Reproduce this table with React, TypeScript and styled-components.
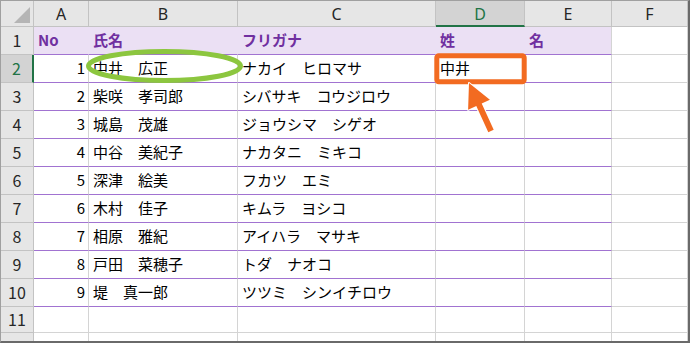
import styled, { createGlobalStyle, css } from 'styled-components';

const GlobalStyle = createGlobalStyle`
  html, body {
    margin: 0;
    padding: 0;
    background: #fff;
  }
  body {
    font-family: "Noto Sans CJK JP", "Noto Sans", sans-serif;
  }
`;

const grid = '#d4d4d4';
const headLine = '#c3c3c3';
const purple = '#a173d1';
const green = '#217346';

const Frame = styled.div`
  position: relative;
  width: 690px;
  height: 343px;
  box-sizing: border-box;
  border-left: 1px solid #a0a0a0;
  border-top: 1px solid #a0a0a0;
  border-right: 2px solid #6a6a6a;
  border-bottom: 2px solid #6a6a6a;
  overflow: hidden;
`;

const Sheet = styled.div`
  display: grid;
  grid-template-columns: 33px 55px 149px 198px 89px 87px 1fr;
  grid-template-rows: 26px repeat(10, 28px) 26px 28px;
  font-size: 15px;
  line-height: 1;
  color: #000;
`;

const Corner = styled.div`
  display: flex;
  align-items: flex-end;
  justify-content: flex-end;
  padding: 0 3px 3px 0;
  background: #e6e6e6;
  border-right: 1px solid ${headLine};
  border-bottom: 1px solid ${headLine};
`;

const Triangle = styled.div`
  width: 16px;
  height: 16px;
  background: #b5b5b5;
  clip-path: polygon(100% 0, 100% 100%, 0 100%);
`;

const ColHead = styled.div<{ $active?: boolean }>`
  display: flex;
  align-items: center;
  justify-content: center;
  padding-top: 1px;
  background: #e6e6e6;
  color: #262626;
  font-family: "Noto Sans", sans-serif;
  font-size: 16px;
  border-right: 1px solid ${headLine};
  border-bottom: 1px solid ${headLine};
  ${(p) =>
    p.$active &&
    css`
      background: #d3d3d3;
      color: ${green};
      border-bottom: 2px solid ${green};
    `}
`;

const RowHead = styled.div<{ $active?: boolean }>`
  display: flex;
  align-items: center;
  justify-content: center;
  padding-bottom: 2px;
  background: #e6e6e6;
  color: #262626;
  font-size: 16px;
  border-right: 1px solid ${headLine};
  border-bottom: 1px solid ${headLine};
  ${(p) =>
    p.$active &&
    css`
      background: #d3d3d3;
      color: ${green};
      border-right: 2px solid ${green};
    `}
`;

const Cell = styled.div<{ $right?: boolean; $title?: boolean; $line?: 'purple' | 'gray' }>`
  display: flex;
  align-items: center;
  justify-content: ${(p) => (p.$right ? 'flex-end' : 'flex-start')};
  padding: 0 3px 2px 4px;
  white-space: nowrap;
  overflow: visible;
  border-right: 1px solid ${grid};
  border-bottom: 1px solid ${(p) => (p.$line === 'purple' ? purple : grid)};
  ${(p) =>
    p.$title &&
    css`
      background: #ebe0f4;
      color: #7030a0;
      font-weight: 700;
      border-right-color: #ebe0f4;
    `}
`;

const Overlay = styled.svg`
  position: absolute;
  top: -1px;
  left: -1px;
  width: 690px;
  height: 343px;
  pointer-events: none;
`;

const headers = ['No', '氏名', 'フリガナ', '姓', '名'];

const people: [number, string, string][] = [
  [1, '中井　広正', 'ナカイ　ヒロマサ'],
  [2, '柴咲　孝司郎', 'シバサキ　コウジロウ'],
  [3, '城島　茂雄', 'ジョウシマ　シゲオ'],
  [4, '中谷　美紀子', 'ナカタニ　ミキコ'],
  [5, '深津　絵美', 'フカツ　エミ'],
  [6, '木村　佳子', 'キムラ　ヨシコ'],
  [7, '相原　雅紀', 'アイハラ　マサキ'],
  [8, '戸田　菜穂子', 'トダ　ナオコ'],
  [9, '堤　真一郎', 'ツツミ　シンイチロウ'],
];

export default function App() {
  return (
    <>
      <GlobalStyle />
      <Frame>
        <Sheet>
          <Corner>
            <Triangle />
          </Corner>
          {['A', 'B', 'C', 'D', 'E', 'F'].map((c) => (
            <ColHead key={c} $active={c === 'D'}>
              {c}
            </ColHead>
          ))}

          <RowHead>1</RowHead>
          {headers.map((h, i) => (
            <Cell key={h} $title $line="purple" style={i === 4 ? { borderRightColor: grid } : undefined}>
              {h}
            </Cell>
          ))}
          <Cell />

          {people.map(([no, name, kana], i) => (
            <Row key={no} index={i + 2} no={no} name={name} kana={kana} last={no === 1 ? '中井' : ''} />
          ))}

          <RowHead>11</RowHead>
          {[0, 1, 2, 3, 4, 5].map((k) => (
            <Cell key={k} />
          ))}
          <RowHead>12</RowHead>
          {[0, 1, 2, 3, 4, 5].map((k) => (
            <Cell key={k} />
          ))}
        </Sheet>

        <Overlay viewBox="0 0 690 343">
          <ellipse cx="164.5" cy="66" rx="76" ry="14.5" fill="none" stroke="#8cc63f" strokeWidth="5" />
          <rect x="436.8" y="55.8" width="87.4" height="26" rx="2" fill="none" stroke="#f26b21" strokeWidth="5" />
          <polygon
            points="469,83 489.9,99.8 481.7,103.5 493.7,129.7 488.3,132.3 476.3,106.1 468.1,109.8"
            fill="#f26b21"
            stroke="#fff"
            strokeWidth="2"
            strokeLinejoin="round"
            paintOrder="stroke"
          />
        </Overlay>
      </Frame>
    </>
  );
}

function Row({ index, no, name, kana, last }: { index: number; no: number; name: string; kana: string; last: string }) {
  return (
    <>
      <RowHead $active={index === 2}>{index}</RowHead>
      <Cell $right $line="purple">
        {no}
      </Cell>
      <Cell $line="purple">{name}</Cell>
      <Cell $line="purple">{kana}</Cell>
      <Cell $line="purple">{last}</Cell>
      <Cell $line="purple" />
      <Cell />
    </>
  );
}
